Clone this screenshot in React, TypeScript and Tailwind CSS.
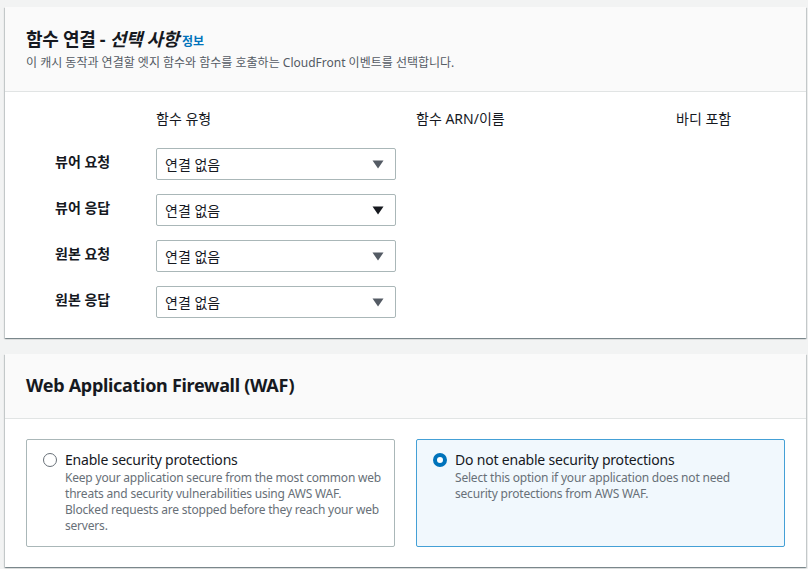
import React from "react";

const FONT = { fontFamily: '"Noto Sans", "Noto Sans CJK KR", sans-serif' };

function Caret({ dark }: { dark?: boolean }) {
  return (
    <svg width="12" height="9" viewBox="0 0 12 9" className="shrink-0">
      <path d="M0.5 0.5 H11.5 L6 8.5 Z" fill={dark ? "#16191f" : "#545b64"} />
    </svg>
  );
}

function Select({ dark }: { dark?: boolean }) {
  return (
    <div className="flex h-[32px] w-[240px] items-center justify-between rounded-[2px] border border-[#aab7b8] bg-white pl-[8px] pr-[11px] text-[14px] text-[#16191f]">
      <span>연결 없음</span>
      <Caret dark={dark} />
    </div>
  );
}

const rows = ["뷰어 요청", "뷰어 응답", "원본 요청", "원본 응답"];

export default function App() {
  return (
    <div style={FONT} className="min-h-[569px] w-[808px] bg-[#f2f3f3] pl-[5px] pr-[2px] pt-[7px] text-[#16191f]">
      {/* Panel 1 */}
      <div className="bg-white shadow-[0_1px_1px_0_rgba(0,28,36,0.3),1px_1px_1px_0_rgba(0,28,36,0.15),-1px_1px_1px_0_rgba(0,28,36,0.15)]">
        <div className="h-[85px] border-b border-[#e1e4e4] bg-[#fafafa] px-[21px] pt-[20px]">
          <div className="flex items-baseline leading-[24px]">
            <span className="text-[18px] font-bold tracking-[-0.3px]">
              함수 연결 - <i>선택 사항</i>
            </span>
            <span className="ml-[3px] text-[12px] font-bold text-[#0073bb]">정보</span>
          </div>
          <div className="mt-[1px] text-[12px] leading-[16px] text-[#545b64]">
            이 캐시 동작과 연결할 엣지 함수와 함수를 호출하는 CloudFront 이벤트를 선택합니다.
          </div>
        </div>
        <div className="pb-[20px] pl-[50px] pt-[17px]">
          <div className="grid grid-cols-[101px_260px_260px_1fr] text-[14px] leading-[20px]">
            <div />
            <div>함수 유형</div>
            <div>함수 ARN/이름</div>
            <div>바디 포함</div>
          </div>
          <div className="mt-[19px] flex flex-col gap-[14px]">
            {rows.map((r, i) => (
              <div key={r} className="grid grid-cols-[101px_260px_260px_1fr] items-center">
                <div className="pb-[5px] text-[14px] font-bold leading-[20px]">{r}</div>
                <Select dark={i === 1} />
                <div />
                <div />
              </div>
            ))}
          </div>
        </div>
      </div>

      {/* Panel 2 */}
      <div className="mt-[16px] bg-white shadow-[0_1px_1px_0_rgba(0,28,36,0.3),1px_1px_1px_0_rgba(0,28,36,0.15),-1px_1px_1px_0_rgba(0,28,36,0.15)]">
        <div className="flex h-[65px] items-center border-b border-[#e1e4e4] bg-[#fafafa] px-[21px]">
          <span className="pb-[2px] text-[18px] font-bold leading-[24px] tracking-[-0.3px]">Web Application Firewall (WAF)</span>
        </div>
        <div className="grid grid-cols-2 gap-[21px] px-[21px] pb-[20px] pt-[20px] tracking-[-0.2px]">
          <div className="flex gap-[8px] rounded-[2px] border border-[#aab7b8] pb-[12px] pl-[16px] pr-[12px] pt-[10px]">
            <div className="mt-[3px] h-[14px] w-[14px] shrink-0 rounded-full border border-[#687078] bg-white" />
            <div>
              <div className="text-[14px] leading-[20px]">Enable security protections</div>
              <div className="text-[12px] leading-[16px] text-[#687078]">
                Keep your application secure from the most common web threats and security vulnerabilities using AWS WAF. Blocked requests are stopped before they reach your web servers.
              </div>
            </div>
          </div>
          <div className="flex gap-[8px] rounded-[2px] border border-[#44a0d6] bg-[#f1f8fd] pb-[12px] pl-[16px] pr-[12px] pt-[10px]">
            <div className="mt-[3px] h-[14px] w-[14px] shrink-0 rounded-full border-[4px] border-[#0073bb] bg-white" />
            <div>
              <div className="text-[14px] leading-[20px]">Do not enable security protections</div>
              <div className="text-[12px] leading-[16px] text-[#687078]">
                Select this option if your application does not need security protections from AWS WAF.
              </div>
            </div>
          </div>
        </div>
      </div>
    </div>
  );
}
